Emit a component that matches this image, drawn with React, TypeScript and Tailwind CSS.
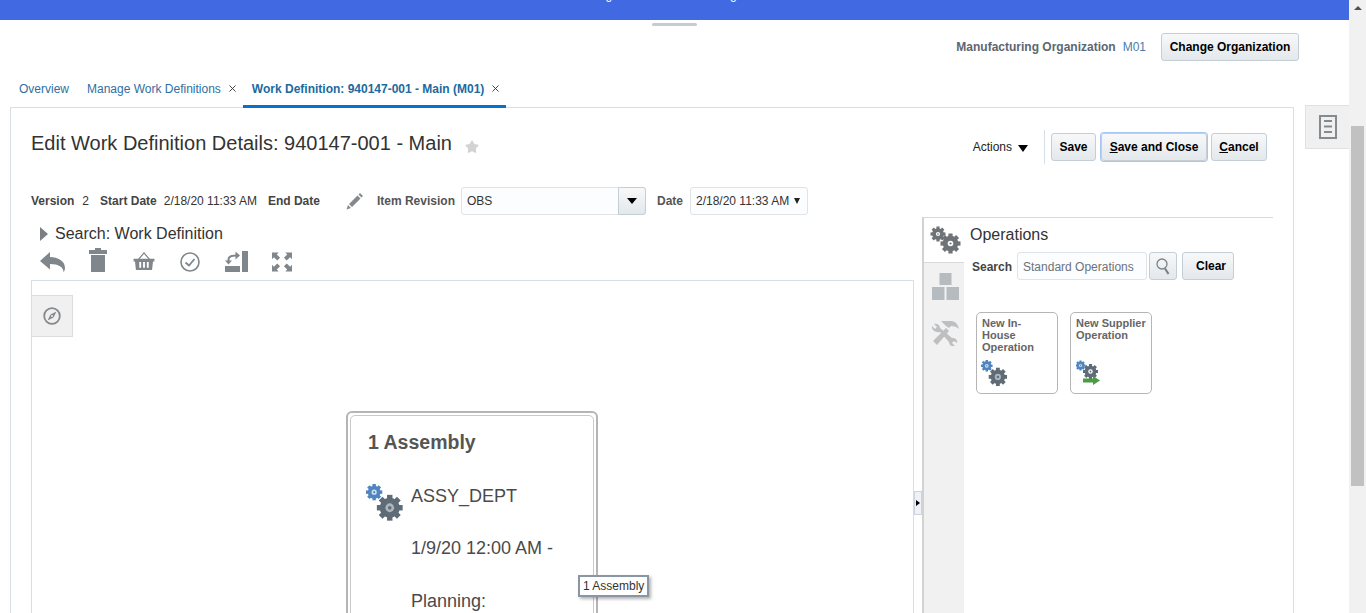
import React from "react";
import { X, Star } from "lucide-react";

const font = { fontFamily: '"Liberation Sans", Arial, sans-serif' };

function Gear({ x, y, r, fill, hole = 0.32, holeFill = "#fff" }: { x: number; y: number; r: number; fill: string; hole?: number; holeFill?: string }) {
  const teeth = Array.from({ length: 8 }, (_, i) => i * 45);
  return (
    <g transform={`translate(${x} ${y})`}>
      {teeth.map((a) => (
        <rect key={a} x={-r * 0.21} y={-r} width={r * 0.42} height={r * 0.5} fill={fill} transform={`rotate(${a})`} />
      ))}
      <circle r={r * 0.78} fill={fill} />
      <circle r={r * hole} fill={holeFill} />
      <circle r={r * hole * 0.4} fill={fill} />
    </g>
  );
}

function GearsColor({ size = 28 }: { size?: number }) {
  return (
    <svg width={size} height={size} viewBox="0 0 28 28">
      <Gear x={6} y={6} r={6} fill="#4f86c0" hole={0.32} holeFill="#cfe0f0" />
      <Gear x={17.5} y={17.5} r={9.5} fill="#5f6b76" hole={0.34} holeFill="#aeb5bb" />
    </svg>
  );
}

function GearsArrow() {
  return (
    <svg width="26" height="26" viewBox="0 0 26 26">
      <Gear x={4.5} y={5.5} r={5} fill="#4f86c0" hole={0.32} holeFill="#cfe0f0" />
      <Gear x={14.5} y={11.5} r={7.5} fill="#5f6b76" hole={0.3} holeFill="#fff" />
      <path d="M7 18.500h10V16l7 4.500-7 4.500v-2.500H7z" fill="#4c9a42" />
    </svg>
  );
}

function Btn({ children, className = "" }: { children: React.ReactNode; className?: string }) {
  return (
    <button className={`h-7 rounded-[3px] border border-[#c4ced7] bg-gradient-to-b from-[#f7f8f9] to-[#e3e8ec] text-xs font-bold text-black flex items-center justify-center ${className}`}>
      {children}
    </button>
  );
}

function Toolbar() {
  const fill = "#7f868c";
  return (
    <div className="flex items-end mt-[3px] h-[28px] pb-[5px]">
      <svg className="ml-[9px]" width="25" height="21" viewBox="0 0 25 21">
        <path d="M0 10 10 1v5c8 0 15 4 15 11 0 1.500-.5 3-1.500 4 0-5-5-8-13.500-8v5.500z" fill={fill} />
      </svg>
      <svg className="ml-[24px]" width="18" height="24" viewBox="0 0 18 24">
        <path d="M6 0h6v2h6v4H0V2h6z M2 7h14v17H2z" fill={fill} />
      </svg>
      <svg className="ml-[26px] mb-[2px]" width="22" height="18" viewBox="0 0 22 19">
        <path d="M5 8 11 1l6 7" stroke={fill} strokeWidth="1.3" fill="none" />
        <path d="M0 7h22v3h-1.500l-1 9h-17l-1-9H0z" fill={fill} />
        <path d="M6 10.500h2v6H6zM10 10.500h2v6h-2zM14 10.500h2v6h-2z" fill="#fff" />
      </svg>
      <svg className="ml-[25px]" width="20" height="20" viewBox="0 0 20 20">
        <circle cx="10" cy="10" r="9" stroke={fill} strokeWidth="1.600" fill="none" />
        <path d="M5.500 10.500 9 13.500 14.500 7" stroke={fill} strokeWidth="1.800" fill="none" />
      </svg>
      <svg className="ml-[25px]" width="23" height="21" viewBox="0 0 23 21">
        <path d="M17 0h6v21h-6zM0 15h15v6H0z" fill={fill} />
        <path d="M3.500 12V8.500C3.500 5.500 6 4.500 11 4.500" stroke={fill} strokeWidth="2" fill="none" />
        <path d="M10.500 0.500 15 4.500 10.500 8.500zM0 9.500h7L3.500 13.500z" fill={fill} />
      </svg>
      <svg className="ml-[24px]" width="20" height="20" viewBox="0 0 21 20">
        <path d="M0 0h7L5 2l3.500 3.500-3 3L2 5 0 7zM21 0h-7l2 2-3.500 3.500 3 3L19 5l2 2zM0 20h7l-2-2 3.500-3.500-3-3L2 15l-2-2zM21 20h-7l2-2-3.500-3.500 3-3L19 15l2-2z" fill={fill} />
      </svg>
    </div>
  );
}

export default function App() {
  return (
    <div className="w-[1366px] h-[613px] overflow-hidden flex bg-white relative" style={font}>
      <div className="w-[1349px] h-full flex flex-col">
        {/* banner */}
        <div className="h-5 bg-[#4169e1] overflow-hidden flex justify-center shrink-0">
          <div className="text-xs leading-4 text-white mt-[-13px] ml-[-32px] whitespace-nowrap">Loading Work Definition Manager</div>
        </div>
        <div className="h-[3px] shrink-0 flex justify-center">
          <div className="w-[45px] h-[3px] mt-[3px] rounded-sm bg-[#c6cbd6]" />
        </div>
        {/* org row */}
        <div className="h-[50px] shrink-0 flex items-center justify-end pr-[50px] pb-[2px]">
          <span className="text-xs font-bold text-[#5d6670]">Manufacturing Organization</span>
          <span className="text-xs text-[#4c7da8] ml-[7px]">M01</span>
          <Btn className="ml-[15px] w-[138px]">Change Organization</Btn>
        </div>
        {/* tabs */}
        <div className="h-[34px] shrink-0 flex items-stretch pl-[19px] text-xs">
          <div className="pt-[8px] text-[#2f6f9f]">Overview</div>
          <div className="pt-[8px] ml-[18px] text-[#2f6f9f]">Manage Work Definitions</div>
          <div className="pt-[10px] ml-[6px]"><X size={11} strokeWidth={2} className="text-[#333]" /></div>
          <div className="ml-[5px] w-[263px] pl-[9px] pt-[8px] border-b-[3px] border-[#0572ce] flex relative z-10 font-bold text-[#1c6a9e] h-[35px]">
            <span>Work Definition: 940147-001 - Main (M01)</span>
            <span className="ml-[6px] mt-[2px]"><X size={11} strokeWidth={2} className="text-[#333]" /></span>
          </div>
        </div>
        {/* body */}
        <div className="flex-1 min-h-0 flex">
          <div className="ml-[10px] w-[1284px] border border-[#d6dfe6] border-b-0 overflow-hidden flex flex-col">
            {/* header */}
            <div className="h-[75px] shrink-0 flex">
              <div className="pl-[20px] pt-[21px] flex items-start">
                <span className="text-xl leading-[28px] text-[#333]">Edit Work Definition Details: 940147-001 - Main</span>
                <Star size={14} className="ml-[13px] mt-[11px] text-[#d3d3d3]" fill="#d3d3d3" />
              </div>
              <div className="ml-auto pr-[26px] pt-[25px] flex items-start">
                <span className="text-xs text-[#222] mt-[6px]">Actions</span>
                <span className="mt-[12px] ml-[6px] w-0 h-0 border-x-[5px] border-x-transparent border-t-[7px] border-t-black" />
                <span className="ml-[16px] h-[34px] w-px bg-[#d6dfe6] -mt-[3px]" />
                <Btn className="ml-[6px] w-[45px]">Save</Btn>
                <Btn className="ml-[5px] w-[106px] border-[#8fb5ec] shadow-[0_0_0_1px_#a8c6f2]"><span><u>S</u>ave and Close</span></Btn>
                <Btn className="ml-[4px] w-[56px]"><span><u>C</u>ancel</span></Btn>
              </div>
            </div>
            {/* meta */}
            <div className="h-[36px] shrink-0 flex items-center pl-[20px] text-xs text-[#333]">
              <b className="text-[#444]">Version</b>
              <span className="ml-[8px]">2</span>
              <b className="ml-[11px] text-[#444]">Start Date</b>
              <span className="ml-[7px]">2/18/20 11:33 AM</span>
              <b className="ml-[11px] text-[#444]">End Date</b>
              <svg className="ml-[26px]" width="17" height="17" viewBox="0 0 17 17" fill="#85898d">
                <path d="M3 11 11.500 2.500l3 3L6 14zM2 12l3 3-4.500 1.500zM12.500 1.500 14 0l3 3-1.500 1.500z" />
              </svg>
              <b className="ml-[14px] text-[#555]">Item Revision</b>
              <div className="ml-[6px] w-[185px] h-7 border border-[#dfe4ea] rounded-[3px] bg-[#fbfdff] flex items-center pl-[5px] relative">
                OBS
                <div className="absolute right-[-1px] top-[-1px] h-7 w-[28px] border border-[#c4ced7] rounded-r-[3px] bg-gradient-to-b from-[#f7f8f9] to-[#e3e8ec] flex items-center justify-center">
                  <span className="w-0 h-0 border-x-[5px] border-x-transparent border-t-[6px] border-t-black" />
                </div>
              </div>
              <b className="ml-[11px] text-[#555]">Date</b>
              <div className="ml-[7px] w-[118px] h-7 border border-[#dfe4ea] rounded-[3px] bg-[#fbfdff] flex items-center pl-[5px]">
                2/18/20 11:33 AM
                <span className="ml-[5px] w-0 h-0 border-x-[3.500px] border-x-transparent border-t-[6px] border-t-[#222]" />
              </div>
            </div>
            {/* split */}
            <div className="flex-1 min-h-0 flex">
              <div className="w-[903px] shrink-0 pl-[20px] flex flex-col min-h-0">
                <div className="h-[25px] mt-[2px] shrink-0 flex items-center pl-[9px]">
                  <span className="w-0 h-0 border-y-[7px] border-y-transparent border-l-[8px] border-l-[#7b7f83]" />
                  <span className="ml-[7px] text-base text-[#333]">Search: Work Definition</span>
                </div>
                <Toolbar />
                <div className="flex-1 min-h-0 mt-[3px] border border-[#d6dfe6] border-b-0 overflow-hidden">
                  <div className="w-[41px] h-[42px] mt-[14px] border-r border-b border-t border-[#dcdcdc] bg-[#f0f0f0] flex items-center justify-center">
                    <svg width="18" height="18" viewBox="0 0 18 18">
                      <circle cx="9" cy="9" r="7.800" stroke="#85898d" strokeWidth="1.800" fill="none" />
                      <path d="M13.500 4.500 10.500 10.500 4.500 13.500l3-6z" fill="#85898d" />
                      <circle cx="9" cy="9" r="1" fill="#f0f0f0" />
                    </svg>
                  </div>
                  {/* node */}
                  <div className="ml-[314px] mt-[74px] w-[252px] h-[300px] rounded-[6px] border-[2px] border-[#b5b5b5] p-[2px]">
                    <div className="h-full rounded-[5px] border border-[#c9c9c9] pl-[17px] pt-[14px] text-[#555]">
                      <div className="text-[19.5px] font-bold leading-[24px]">1 Assembly</div>
                      <div className="mt-[28px] flex items-start">
                        <div className="-ml-[2px] mt-[2px]"><GearsColor size={38} /></div>
                        <div className="ml-[7px] text-lg leading-[22px] text-[#4a4a4a]">
                          <div className="mt-[3px]">ASSY_DEPT</div>
                          <div className="mt-[30px]">1/9/20 12:00 AM -</div>
                          <div className="mt-[31px]">Planning:</div>
                        </div>
                      </div>
                    </div>
                  </div>
                </div>
              </div>
              {/* splitter */}
              <div className="w-[8px] shrink-0 flex items-center">
                <div className="w-[8px] h-[24px] mt-[174px] border border-[#cbd5df] bg-[#eef1f5] flex items-center justify-center">
                  <span className="w-0 h-0 border-y-[3px] border-y-transparent border-l-[4px] border-l-black" />
                </div>
              </div>
              {/* right */}
              <div className="flex-1 min-h-0 flex -mt-[2px]">
                <div className="w-[42px] shrink-0 border-l-2 border-[#d2d2d2] bg-[#f1f1f1] flex flex-col">
                  <div className="h-[46px] bg-white border-t border-b border-[#d9d9d9] flex items-center justify-center pl-[3px]">
                    <svg width="31" height="28" viewBox="0 0 31 28">
                      <Gear x={8} y={8} r={7.500} fill="#6e7377" hole={0.28} holeFill="#fff" />
                      <Gear x={20.500} y={17.500} r={10} fill="#6e7377" hole={0.28} holeFill="#fff" />
                    </svg>
                  </div>
                  <div className="flex justify-center mt-[10px] pl-[3px]">
                    <svg width="27" height="27" viewBox="0 0 27 27">
                      <path d="M7.500 0h12v12h-12zM0 14h12.500v13H0zM14.500 14H27v13H14.500z" fill="#b6bbbf" />
                    </svg>
                  </div>
                  <div className="flex justify-center mt-[20px] pl-[2px]">
                    <svg width="28" height="26" viewBox="0 0 28 26" fill="#bdbfc1">
                      <path d="M10 1h10c4 0 7 3 8 8-2-2-5-3-8-3l-2 2-3-2z" />
                      <path d="M15 8l3 3L6 25l-4-4z" />
                      <path d="M1 6l3 3 2-2-3-3c3-1 6 1 6 4l12 10c3-.5 6 2 5 5l-3-2-2 2 3 3c-3 1-6-1-6-4L9 12C5 13 0 10 1 6z" />
                    </svg>
                  </div>
                </div>
                <div className="w-[310px] shrink-0 border-t border-[#d9d9d9] pl-[7px] -ml-[1px] text-xs">
                  <div className="text-base text-[#333] leading-5 pt-[7px]">Operations</div>
                  <div className="flex items-center mt-[7px] pl-[2px]">
                    <b className="text-[#444] pt-[2px]">Search</b>
                    <div className="ml-[5px] w-[130px] h-7 border border-[#dfe4ea] rounded-[3px] bg-[#fbfdff] flex items-center pl-[5px] pt-[1px] text-[#6d7278]">Standard Operations</div>
                    <Btn className="ml-[2px] w-[28px]">
                      <svg width="14" height="17" viewBox="0 0 14 17" fill="none" stroke="#7c8287">
                        <circle cx="6" cy="6" r="5" strokeWidth="1.300" />
                        <path d="M9 10.500 12.500 16" strokeWidth="2.200" />
                      </svg>
                    </Btn>
                    <Btn className="ml-[5px] w-[52px] !justify-end pr-[7px]">Clear</Btn>
                  </div>
                  <div className="flex mt-[32px] pl-[6px] gap-[12px]">
                    <div className="w-[82px] h-[82px] rounded-[5px] border border-[#b5b5b5] pl-[5px] pt-[4px] font-bold text-[11px] leading-[12px] text-[#666] flex flex-col">
                      <div>New In-<br />House<br />Operation</div>
                      <div className="mt-[7px] -ml-[1px]"><GearsColor size={27} /></div>
                    </div>
                    <div className="w-[82px] h-[82px] rounded-[5px] border border-[#b5b5b5] pl-[5px] pt-[4px] font-bold text-[11px] leading-[12px] text-[#666] flex flex-col">
                      <div>New Supplier<br />Operation</div>
                      <div className="mt-[19px]"><GearsArrow /></div>
                    </div>
                  </div>
                </div>
              </div>
            </div>
          </div>
          {/* side tab */}
          <div className="ml-[11px] -mt-[2px] w-[44px] h-[44px] border border-r-0 border-[#e0e0e0] bg-[#f0f0f0] flex items-center justify-center shrink-0">
            <svg width="18" height="24" viewBox="0 0 18 24">
              <path d="M1 1h16v22H1z" stroke="#858a8e" strokeWidth="2" fill="none" />
              <path d="M5 6h8M5 11.500h8M5 17h8" stroke="#858a8e" strokeWidth="2" />
            </svg>
          </div>
        </div>
      </div>
      {/* scrollbar */}
      <div className="w-[17px] h-full bg-[#f1f1f1] shrink-0 flex flex-col items-center">
        <span className="mt-[6px] w-0 h-0 border-x-[4px] border-x-transparent border-b-[4px] border-b-[#505050]" />
        <div className="mt-[116px] w-[13px] h-[360px] bg-[#c1c1c1]" />
      </div>
      {/* tooltip */}
      <div className="absolute left-[578px] top-[575px] h-[22px] border-2 border-[#8a96a3] bg-white px-[3px] text-xs leading-[18px] text-[#333] shadow-[2px_2px_3px_rgba(0,0,0,0.3)] whitespace-nowrap">1 Assembly</div>
    </div>
  );
}
